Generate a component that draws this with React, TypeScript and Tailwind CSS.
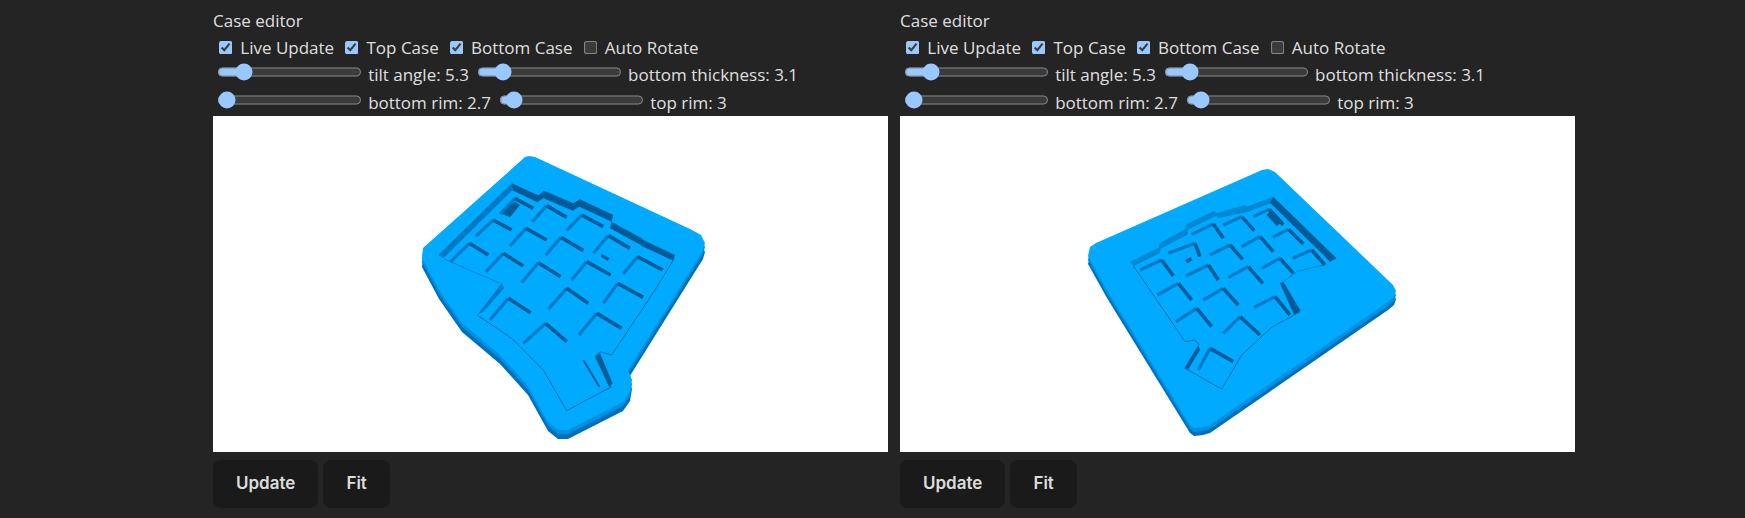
import React from 'react';

// zoom-crop coords -> page coords
const z = (ox: number, oy: number, pts: number[][]) =>
  pts.map(([x, y]) => `${ox + x / 3},${oy + y / 3}`).join(' ');

const L1 = 400, T1 = 140;
const L2 = 1070, T2 = 150;

const DARK = '#005c99';
const MID = '#0079c4';

const leftOutline =
  '525,157 529,156 535,157 690,229 701,235 705,243 703,250 628,370 632,380 630,392 623,402 568,430 558,430 548,422 528,386 500,355 462,323 439,290 422,258 423,248';

const rightOutline =
  '1262,170 1268,169 1275,172 1393,285 1396,291 1394,297 1388,302 1210,425 1203,427 1194,428 1190,425 1107,290 1088,256 1090,247 1096,243';

type Well = [number[], number[], number[]];

const leftWells: Well[] = [
  [[345, 175], [300, 222], [400, 205]],
  [[440, 197], [397, 245], [500, 232]],
  [[545, 225], [500, 272], [610, 260]],
  [[280, 240], [228, 288], [335, 270]],
  [[378, 265], [330, 318], [440, 300]],
  [[483, 292], [437, 345], [550, 332]],
  [[625, 287], [580, 340], [690, 325]],
  [[208, 310], [152, 365], [265, 345]],
  [[310, 340], [258, 395], [370, 378]],
  [[415, 368], [365, 428], [482, 410]],
  [[560, 365], [515, 420], [632, 405]],
  [[712, 350], [670, 402], [788, 390]],
  [[653, 430], [610, 490], [730, 472]],
  [[500, 445], [445, 508], [565, 490]],
  [[325, 475], [270, 540], [392, 518]],
  [[590, 520], [537, 585], [665, 565]],
  [[437, 550], [370, 610], [500, 605]],
];

const rightWells: Well[] = [
  [[597, 178], [550, 200], [640, 225]],
  [[515, 200], [460, 225], [553, 242]],
  [[430, 222], [365, 253], [460, 265]],
  [[655, 238], [608, 262], [700, 282]],
  [[570, 260], [515, 290], [610, 305]],
  [[480, 285], [420, 315], [518, 328]],
  [[375, 280], [295, 310], [390, 320]],
  [[725, 300], [668, 325], [765, 345]],
  [[630, 325], [575, 355], [670, 370]],
  [[535, 350], [475, 382], [578, 400]],
  [[415, 345], [348, 378], [445, 390]],
  [[275, 330], [210, 360], [310, 378]],
  [[460, 415], [400, 450], [505, 465]],
  [[325, 400], [262, 435], [365, 450]],
  [[615, 440], [552, 472], [660, 495]],
  [[380, 475], [318, 515], [425, 530]],
  [[510, 500], [460, 550], [570, 555]],
  [[420, 595], [385, 660], [490, 635]],
];

const Wells = ({ list, ox, oy }: { list: Well[]; ox: number; oy: number }) => (
  <>
    {list.map(([c, a, b], i) => (
      <g key={i} fill="none">
        <polyline points={z(ox, oy, [a, c])} stroke={MID} strokeWidth="3.2" />
        <polyline points={z(ox, oy, [c, b])} stroke={DARK} strokeWidth="3.6" />
      </g>
    ))}
  </>
);

const leftWall = [
  [335, 130], [415, 166], [433, 152], [520, 190], [540, 178], [640, 225], [635, 245], [725, 295], [730, 300], [825, 345],
  [820, 362], [725, 318], [722, 315], [630, 265], [635, 245], [538, 200], [518, 212], [430, 175], [412, 187], [335, 150],
];

const rightWall = [
  [180, 335], [268, 292], [268, 280], [345, 238], [350, 222], [432, 183], [440, 190], [525, 165], [530, 170], [610, 140],
  [616, 155], [535, 185], [445, 205], [438, 198], [356, 238], [352, 254], [272, 296], [270, 308], [192, 348],
];

const LeftCase = () => (
  <svg className="block w-full h-full" viewBox="213 116 675 336">
    <polygon points={leftOutline} fill="#0070bd" transform="translate(0 9)" />
    <polygon points={leftOutline} fill="#0090e0" transform="translate(0 4)" />
    <polygon points={leftOutline} fill="#00aaff" />
    {/* pocket walls */}
    <polygon points={z(L1, T1, leftWall)} fill={DARK} />
    <polygon points={z(L1, T1, [[335, 130], [340, 148], [130, 355], [115, 345]])} fill={MID} />
    <polygon points={z(L1, T1, [[345, 185], [360, 195], [330, 232], [298, 218]])} fill={DARK} />
    <polygon points={z(L1, T1, [[605, 342], [630, 355], [622, 362], [603, 350]])} fill={DARK} />
    <polygon points={z(L1, T1, [[305, 430], [312, 445], [250, 515], [232, 525]])} fill={MID} />
    <polygon points={z(L1, 290, [[585, 200], [600, 190], [638, 280], [628, 292]])} fill={DARK} />
    <polyline points={z(L1, T1, [[135, 358], [300, 430]])} fill="none" stroke={MID} strokeWidth="0.8" />
    <polyline
      points={z(L1, 290, [[232, 75], [335, 145], [430, 240], [500, 362], [635, 290]])}
      fill="none"
      stroke={DARK}
      strokeWidth="0.8"
    />
    <polyline
      points={z(L1, 290, [[585, 200], [600, 185], [635, 195], [765, 0]])}
      fill="none"
      stroke={DARK}
      strokeWidth="0.8"
    />
    <polyline points={z(L1, T1, [[820, 360], [765, 450]])} fill="none" stroke={DARK} strokeWidth="0.8" />
    <Wells list={leftWells} ox={L1} oy={T1} />
    <polyline points={z(L1, 290, [[550, 210], [598, 290]])} fill="none" stroke={DARK} strokeWidth="2" />
  </svg>
);

const RightCase = () => (
  <svg className="block w-full h-full" viewBox="900 116 675 336">
    <polygon points={rightOutline} fill="#0070bd" transform="translate(0 8)" />
    <polygon points={rightOutline} fill="#0090e0" transform="translate(0 4)" />
    <polygon points={rightOutline} fill="#00aaff" />
    {/* pocket walls */}
    <polygon points={z(L2, T2, rightWall)} fill="#0088d4" />
    <polygon points={z(L2, T2, [[610, 140], [800, 325], [780, 335], [600, 158]])} fill={DARK} />
    <polygon points={z(L2, T2, [[590, 195], [605, 178], [640, 215], [620, 228]])} fill={DARK} />
    <polygon points={z(L2, T2, [[345, 330], [362, 322], [368, 330], [352, 340]])} fill={DARK} />
    <polygon points={z(L2, T2, [[630, 400], [640, 395], [692, 482], [672, 494]])} fill={DARK} />
    <polygon points={z(L2, 290, [[385, 165], [390, 180], [355, 238], [343, 235]])} fill={DARK} />
    <polyline
      points={z(L2, 290, [[240, 0], [345, 155], [375, 150], [388, 165]])}
      fill="none"
      stroke={DARK}
      strokeWidth="0.8"
    />
    <polyline points={z(L2, T2, [[190, 348], [240, 420]])} fill="none" stroke={DARK} strokeWidth="0.8" />
    <polyline
      points={z(L2, 290, [[345, 235], [455, 297], [515, 195], [605, 112], [690, 65]])}
      fill="none"
      stroke={DARK}
      strokeWidth="0.8"
    />
    <polyline points={z(L2, T2, [[640, 395], [680, 365], [760, 345]])} fill="none" stroke={MID} strokeWidth="0.8" />
    <Wells list={rightWells} ox={L2} oy={T2} />
  </svg>
);

const Check = ({ label, checked }: { label: string; checked: boolean }) => (
  <label className="flex items-center gap-[7px]">
    <input type="checkbox" defaultChecked={checked} className="[zoom:1.1] w-[13px] h-[13px]" />
    <span>{label}</span>
  </label>
);

const Range = ({ label, value }: { label: string; value: number }) => (
  <label className="flex items-center gap-[6px]">
    <input type="range" min={0} max={100} defaultValue={value} className="[zoom:1.125] w-[129px] h-4 mb-[5px]" />
    <span>{label}</span>
  </label>
);

const Editor = ({ children }: { children: React.ReactNode }) => (
  <div className="w-[675px] shrink-0">
    <div className="h-[24px] leading-[24px]">Case editor</div>
    <div className="flex items-center h-[26px] mt-[2px] pl-[6px] gap-[11px]">
      <Check label="Live Update" checked />
      <Check label="Top Case" checked />
      <Check label="Bottom Case" checked />
      <Check label="Auto Rotate" checked={false} />
    </div>
    <div className="flex items-center h-[28px] pl-1 gap-2">
      <Range label="tilt angle: 5.3" value={14} />
      <Range label="bottom thickness: 3.1" value={13} />
    </div>
    <div className="flex items-center h-[27px] pl-1 gap-2">
      <Range label="bottom rim: 2.7" value={1} />
      <Range label="top rim: 3" value={5} />
    </div>
    <div className="h-[336px] bg-white">{children}</div>
    <div className="flex gap-[5px] mt-2">
      <button className="h-12 px-[23px] rounded-lg bg-[#1a1a1a] font-semibold font-['Inter',sans-serif] text-[17px]">Update</button>
      <button className="h-12 px-[23px] rounded-lg bg-[#1a1a1a] font-semibold font-['Inter',sans-serif] text-[17px]">Fit</button>
    </div>
  </div>
);

export default function App() {
  return (
    <div className="[color-scheme:dark] h-screen bg-[#242424] text-white/[.87] text-[17px] font-['Open_Sans',sans-serif] flex gap-3 pl-[213px] pt-[9px] overflow-hidden">
      <Editor><LeftCase /></Editor>
      <Editor><RightCase /></Editor>
    </div>
  );
}
